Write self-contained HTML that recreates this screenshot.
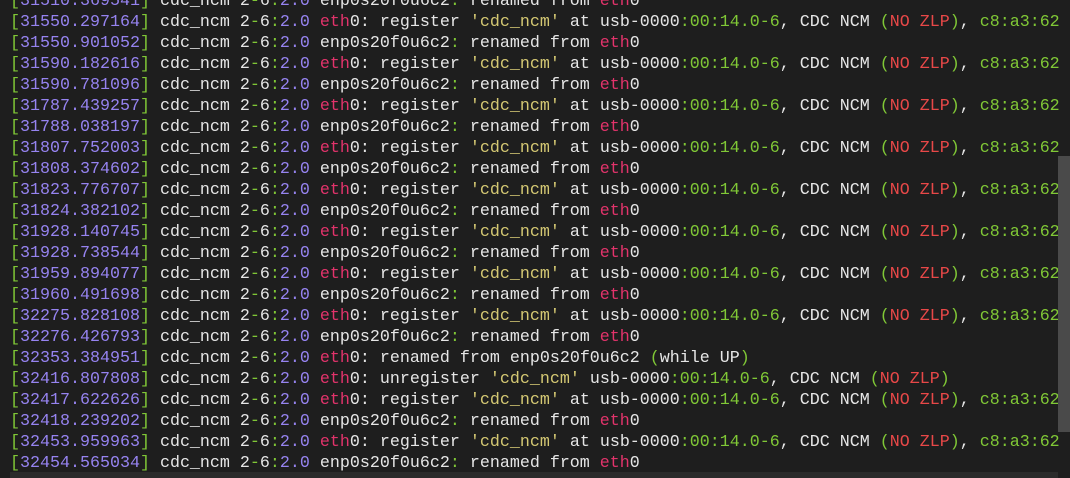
<!DOCTYPE html>
<html><head><meta charset="utf-8"><style>
html,body{margin:0;padding:0;width:1070px;height:478px;overflow:hidden;background:#1e1e1e}
.c{position:absolute;left:10px;top:-9.5px;font-family:"Liberation Mono",monospace;font-size:16.67px;line-height:21px;color:#e6e6e6;white-space:pre}
.g{color:#80c836}.t{color:#9683f0}.m{color:#e2336b}.y{color:#d4c873}.r{color:#e84848}
.sb{position:absolute;left:1058px;top:156px;width:12px;height:276px;background:#4a4a4a}
.hb{position:absolute;left:10px;top:472px;width:1048px;height:6px;background:#2b2b2b}
</style></head><body>
<div class="c"><span class=g>[</span><span class=t>31510.369541</span><span class=g>]</span> cdc_ncm 2<span class=g>-</span>6<span class=g>:</span><span class=t>2.0</span> enp0s20f0u6c2<span class=g>:</span> renamed from <span class=m>eth</span>0
<span class=g>[</span><span class=t>31550.297164</span><span class=g>]</span> cdc_ncm 2<span class=g>-</span>6<span class=g>:</span><span class=t>2.0</span> <span class=m>eth</span>0: register <span class=y>'cdc_ncm'</span> at usb-0000<span class=g>:00:14.0-6</span>, CDC NCM <span class=g>(</span><span class=r>NO ZLP</span><span class=g>)</span>, <span class=g>c8:a3:62</span>
<span class=g>[</span><span class=t>31550.901052</span><span class=g>]</span> cdc_ncm 2<span class=g>-</span>6<span class=g>:</span><span class=t>2.0</span> enp0s20f0u6c2<span class=g>:</span> renamed from <span class=m>eth</span>0
<span class=g>[</span><span class=t>31590.182616</span><span class=g>]</span> cdc_ncm 2<span class=g>-</span>6<span class=g>:</span><span class=t>2.0</span> <span class=m>eth</span>0: register <span class=y>'cdc_ncm'</span> at usb-0000<span class=g>:00:14.0-6</span>, CDC NCM <span class=g>(</span><span class=r>NO ZLP</span><span class=g>)</span>, <span class=g>c8:a3:62</span>
<span class=g>[</span><span class=t>31590.781096</span><span class=g>]</span> cdc_ncm 2<span class=g>-</span>6<span class=g>:</span><span class=t>2.0</span> enp0s20f0u6c2<span class=g>:</span> renamed from <span class=m>eth</span>0
<span class=g>[</span><span class=t>31787.439257</span><span class=g>]</span> cdc_ncm 2<span class=g>-</span>6<span class=g>:</span><span class=t>2.0</span> <span class=m>eth</span>0: register <span class=y>'cdc_ncm'</span> at usb-0000<span class=g>:00:14.0-6</span>, CDC NCM <span class=g>(</span><span class=r>NO ZLP</span><span class=g>)</span>, <span class=g>c8:a3:62</span>
<span class=g>[</span><span class=t>31788.038197</span><span class=g>]</span> cdc_ncm 2<span class=g>-</span>6<span class=g>:</span><span class=t>2.0</span> enp0s20f0u6c2<span class=g>:</span> renamed from <span class=m>eth</span>0
<span class=g>[</span><span class=t>31807.752003</span><span class=g>]</span> cdc_ncm 2<span class=g>-</span>6<span class=g>:</span><span class=t>2.0</span> <span class=m>eth</span>0: register <span class=y>'cdc_ncm'</span> at usb-0000<span class=g>:00:14.0-6</span>, CDC NCM <span class=g>(</span><span class=r>NO ZLP</span><span class=g>)</span>, <span class=g>c8:a3:62</span>
<span class=g>[</span><span class=t>31808.374602</span><span class=g>]</span> cdc_ncm 2<span class=g>-</span>6<span class=g>:</span><span class=t>2.0</span> enp0s20f0u6c2<span class=g>:</span> renamed from <span class=m>eth</span>0
<span class=g>[</span><span class=t>31823.776707</span><span class=g>]</span> cdc_ncm 2<span class=g>-</span>6<span class=g>:</span><span class=t>2.0</span> <span class=m>eth</span>0: register <span class=y>'cdc_ncm'</span> at usb-0000<span class=g>:00:14.0-6</span>, CDC NCM <span class=g>(</span><span class=r>NO ZLP</span><span class=g>)</span>, <span class=g>c8:a3:62</span>
<span class=g>[</span><span class=t>31824.382102</span><span class=g>]</span> cdc_ncm 2<span class=g>-</span>6<span class=g>:</span><span class=t>2.0</span> enp0s20f0u6c2<span class=g>:</span> renamed from <span class=m>eth</span>0
<span class=g>[</span><span class=t>31928.140745</span><span class=g>]</span> cdc_ncm 2<span class=g>-</span>6<span class=g>:</span><span class=t>2.0</span> <span class=m>eth</span>0: register <span class=y>'cdc_ncm'</span> at usb-0000<span class=g>:00:14.0-6</span>, CDC NCM <span class=g>(</span><span class=r>NO ZLP</span><span class=g>)</span>, <span class=g>c8:a3:62</span>
<span class=g>[</span><span class=t>31928.738544</span><span class=g>]</span> cdc_ncm 2<span class=g>-</span>6<span class=g>:</span><span class=t>2.0</span> enp0s20f0u6c2<span class=g>:</span> renamed from <span class=m>eth</span>0
<span class=g>[</span><span class=t>31959.894077</span><span class=g>]</span> cdc_ncm 2<span class=g>-</span>6<span class=g>:</span><span class=t>2.0</span> <span class=m>eth</span>0: register <span class=y>'cdc_ncm'</span> at usb-0000<span class=g>:00:14.0-6</span>, CDC NCM <span class=g>(</span><span class=r>NO ZLP</span><span class=g>)</span>, <span class=g>c8:a3:62</span>
<span class=g>[</span><span class=t>31960.491698</span><span class=g>]</span> cdc_ncm 2<span class=g>-</span>6<span class=g>:</span><span class=t>2.0</span> enp0s20f0u6c2<span class=g>:</span> renamed from <span class=m>eth</span>0
<span class=g>[</span><span class=t>32275.828108</span><span class=g>]</span> cdc_ncm 2<span class=g>-</span>6<span class=g>:</span><span class=t>2.0</span> <span class=m>eth</span>0: register <span class=y>'cdc_ncm'</span> at usb-0000<span class=g>:00:14.0-6</span>, CDC NCM <span class=g>(</span><span class=r>NO ZLP</span><span class=g>)</span>, <span class=g>c8:a3:62</span>
<span class=g>[</span><span class=t>32276.426793</span><span class=g>]</span> cdc_ncm 2<span class=g>-</span>6<span class=g>:</span><span class=t>2.0</span> enp0s20f0u6c2<span class=g>:</span> renamed from <span class=m>eth</span>0
<span class=g>[</span><span class=t>32353.384951</span><span class=g>]</span> cdc_ncm 2<span class=g>-</span>6<span class=g>:</span><span class=t>2.0</span> <span class=m>eth</span>0: renamed from enp0s20f0u6c2 <span class=g>(</span>while UP<span class=g>)</span>
<span class=g>[</span><span class=t>32416.807808</span><span class=g>]</span> cdc_ncm 2<span class=g>-</span>6<span class=g>:</span><span class=t>2.0</span> <span class=m>eth</span>0: unregister <span class=y>'cdc_ncm'</span> usb-0000<span class=g>:00:14.0-6</span>, CDC NCM <span class=g>(</span><span class=r>NO ZLP</span><span class=g>)</span>
<span class=g>[</span><span class=t>32417.622626</span><span class=g>]</span> cdc_ncm 2<span class=g>-</span>6<span class=g>:</span><span class=t>2.0</span> <span class=m>eth</span>0: register <span class=y>'cdc_ncm'</span> at usb-0000<span class=g>:00:14.0-6</span>, CDC NCM <span class=g>(</span><span class=r>NO ZLP</span><span class=g>)</span>, <span class=g>c8:a3:62</span>
<span class=g>[</span><span class=t>32418.239202</span><span class=g>]</span> cdc_ncm 2<span class=g>-</span>6<span class=g>:</span><span class=t>2.0</span> enp0s20f0u6c2<span class=g>:</span> renamed from <span class=m>eth</span>0
<span class=g>[</span><span class=t>32453.959963</span><span class=g>]</span> cdc_ncm 2<span class=g>-</span>6<span class=g>:</span><span class=t>2.0</span> <span class=m>eth</span>0: register <span class=y>'cdc_ncm'</span> at usb-0000<span class=g>:00:14.0-6</span>, CDC NCM <span class=g>(</span><span class=r>NO ZLP</span><span class=g>)</span>, <span class=g>c8:a3:62</span>
<span class=g>[</span><span class=t>32454.565034</span><span class=g>]</span> cdc_ncm 2<span class=g>-</span>6<span class=g>:</span><span class=t>2.0</span> enp0s20f0u6c2<span class=g>:</span> renamed from <span class=m>eth</span>0</div>
<div class="sb"></div>
<div class="hb"></div>
</body></html>
